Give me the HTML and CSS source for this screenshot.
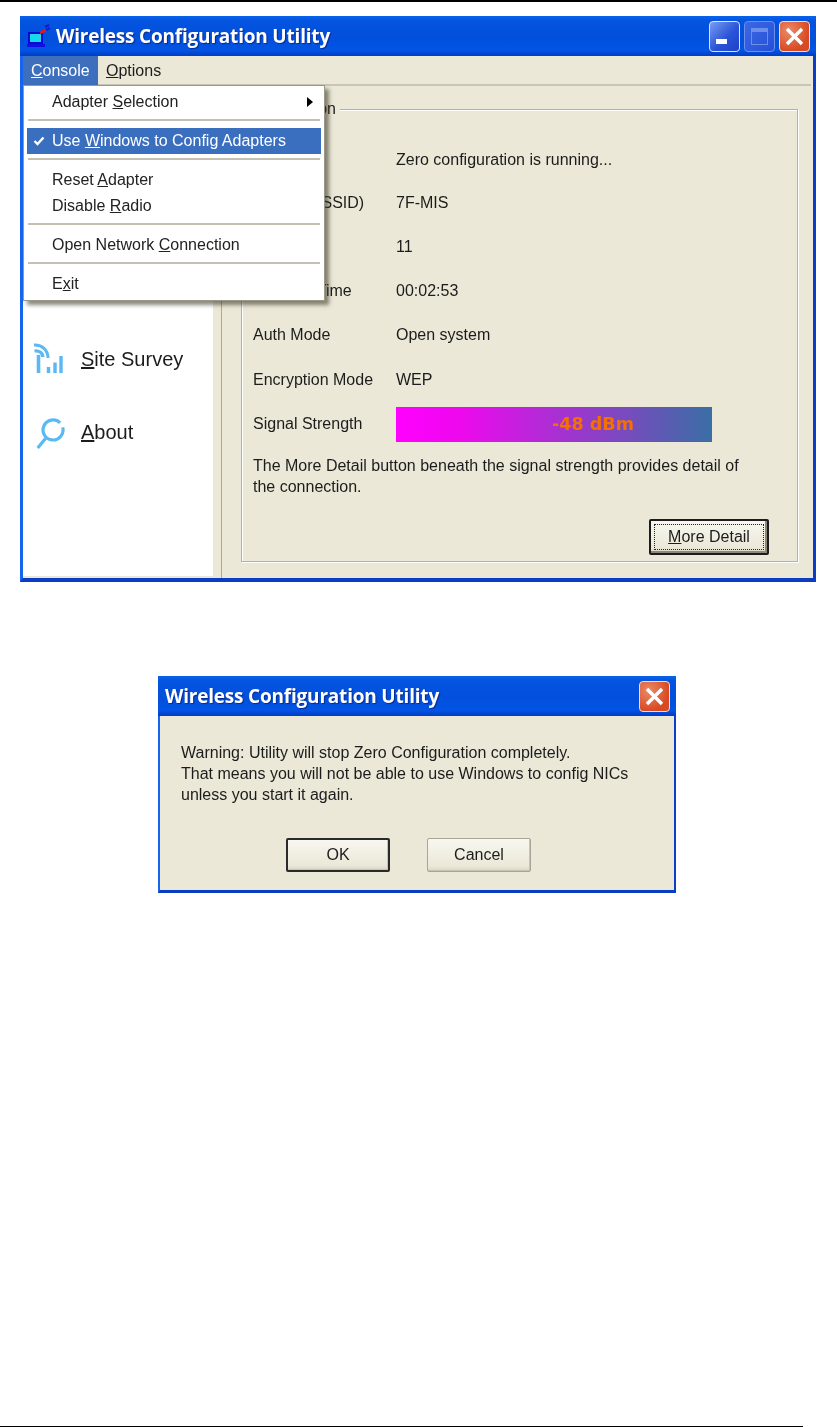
FILE: index.html
```html
<!DOCTYPE html>
<html lang="en">
<head>
    <meta charset="UTF-8">
    <meta name="viewport" content="width=device-width, initial-scale=1.0">
    <title>Wireless Configuration Utility</title>
    <link rel="stylesheet" href="styles.css">
</head>
<body>
    <div class="rule-top"></div>

    <div class="window main-window">
        <div class="titlebar">
            <svg class="app-icon" width="24" height="24" viewBox="0 0 24 24">
                <rect x="2" y="9" width="13" height="10" fill="#18d8f0" stroke="#0808d0" stroke-width="2"/>
                <rect x="0" y="20" width="18" height="3" fill="#1010e0"/>
                <path d="M13 9 L19 6" stroke="#e01818" stroke-width="3"/>
                <path d="M18 3 L22 1 M19 6 L23 4" stroke="#1818d0" stroke-width="2"/>
            </svg>
            <span class="title-text">Wireless Configuration Utility</span>
            <div class="title-buttons">
                <div class="cap-btn cap-min"><span class="min-glyph"></span></div>
                <div class="cap-btn cap-max"><span class="max-glyph"></span></div>
                <div class="cap-btn cap-close">
                    <svg width="21" height="21" viewBox="0 0 21 21"><path d="M3 3 L18 18 M18 3 L3 18" stroke="#fff" stroke-width="3.4"/></svg>
                </div>
            </div>
        </div>

        <div class="client">
            <div class="menubar">
                <div class="menubar-item active"><u>C</u>onsole</div>
                <div class="menubar-item"><u>O</u>ptions</div>
            </div>

            <div class="panes">
                <div class="sidebar">
                    <div class="side-item">
                        <svg width="32" height="34" viewBox="0 0 32 34" fill="none" stroke="#5ab8f4">
                            <path d="M1 3 C9 2.5 15 8 15 16" stroke-width="3"/>
                            <path d="M1.5 9 C6.5 8.5 9.8 11 9.8 15" stroke-width="3.2"/>
                            <path d="M5.5 13 V31" stroke-width="3.6"/>
                            <path d="M15.5 25 V31 M22 20.5 V31 M28 14 V31" stroke-width="3.4"/>
                        </svg>
                        <span><u>S</u>ite Survey</span>
                    </div>
                    <div class="side-item">
                        <svg width="32" height="34" viewBox="0 0 32 34" fill="none" stroke="#5ab8f4">
                            <path d="M27.1 7.9 A10 10 0 1 0 29.7 12.4" stroke-width="3.2"/>
                            <path d="M12.7 23.3 L4.7 33" stroke-width="3.2"/>
                        </svg>
                        <span><u>A</u>bout</span>
                    </div>
                </div>

                <div class="main-pane">
                    <div class="group">
                        <span class="group-label">Connection</span>
                        <div class="fields">
                            <span>Status</span><span>Zero configuration is running...</span>
                            <span>Network (SSID)</span><span>7F-MIS</span>
                            <span>Channel</span><span>11</span>
                            <span>Connect Time</span><span>00:02:53</span>
                            <span>Auth Mode</span><span>Open system</span>
                            <span>Encryption Mode</span><span>WEP</span>
                            <span>Signal Strength</span><div class="signal-bar">-48 dBm</div>
                        </div>
                        <p class="note">The More Detail button beneath the signal strength provides detail of the connection.</p>
                        <div class="group-actions">
                            <button class="btn btn-focus"><span class="focus-ring"><span><u>M</u>ore Detail</span></span></button>
                        </div>
                    </div>
                </div>
            </div>

            <div class="menu">
                <div class="menu-item"><span class="check"></span><span>Adapter <u>S</u>election</span><span class="arrow"></span></div>
                <div class="menu-sep"></div>
                <div class="menu-item selected">
                    <span class="check"><svg width="12" height="10" viewBox="0 0 12 10" fill="none"><path d="M1.5 5 L4.5 8 L10.5 1.5" stroke="#fff" stroke-width="2.4"/></svg></span><span>Use <u>W</u>indows to Config Adapters</span>
                </div>
                <div class="menu-sep"></div>
                <div class="menu-item"><span class="check"></span><span>Reset <u>A</u>dapter</span></div>
                <div class="menu-item"><span class="check"></span><span>Disable <u>R</u>adio</span></div>
                <div class="menu-sep"></div>
                <div class="menu-item"><span class="check"></span><span>Open Network <u>C</u>onnection</span></div>
                <div class="menu-sep"></div>
                <div class="menu-item"><span class="check"></span><span>E<u>x</u>it</span></div>
            </div>
        </div>
    </div>

    <div class="window dialog">
        <div class="titlebar">
            <span class="title-text">Wireless Configuration Utility</span>
            <div class="title-buttons">
                <div class="cap-btn cap-close">
                    <svg width="21" height="21" viewBox="0 0 21 21"><path d="M3 3 L18 18 M18 3 L3 18" stroke="#fff" stroke-width="3.4"/></svg>
                </div>
            </div>
        </div>
        <div class="dialog-body">
            <p class="dialog-text">Warning: Utility will stop Zero Configuration completely.<br>That means you will not be able to use Windows to config NICs<br>unless you start it again.</p>
            <div class="dialog-actions">
                <button class="btn btn-default">OK</button>
                <button class="btn">Cancel</button>
            </div>
        </div>
    </div>

    <div class="rule-bottom"></div>
</body>
</html>
```
FILE: styles.css
```css
html, body {
    margin: 0;
    padding: 0;
}
body {
    width: 837px;
    height: 1427px;
    display: flex;
    flex-direction: column;
    align-items: flex-start;
    background: #fff;
    color: #1c1c1c;
    font-family: "Liberation Sans", Arial, sans-serif;
    font-size: 16px;
    overflow: hidden;
}
.rule-top {
    width: 100%;
    height: 2px;
    background: #000;
}
.rule-bottom {
    width: 803px;
    height: 1px;
    margin-top: auto;
    background: #000;
}

/* window frames */
.window {
    box-sizing: border-box;
    display: flex;
    flex-direction: column;
    border-left: 3px solid #1565ee;
    border-right: 3px solid #0a3fca;
    border-bottom: 4px solid #0a3cc4;
    background: #ebe8d8;
    filter: blur(0.35px);
}
.main-window {
    width: 796px;
    height: 566px;
    margin: 14px 0 0 20px;
}
.dialog {
    width: 518px;
    height: 217px;
    margin: 94px 0 0 158px;
    border-left-width: 2px;
    border-right-width: 2px;
    border-bottom-width: 3px;
}
.titlebar {
    display: flex;
    align-items: center;
    height: 40px;
    flex: none;
    margin: 0 -3px;
    padding: 0 6px 0 7px;
    background: linear-gradient(#0a62ea 0, #0454e0 12%, #024fdc 55%, #0355e6 85%, #003cc4 100%);
}
.dialog .titlebar {
    margin: 0 -2px;
}
.app-icon {
    margin-right: 5px;
}
.title-text {
    color: #fff;
    font-family: "Open Sans", sans-serif;
    font-weight: 700;
    font-size: 19px;
    letter-spacing: -0.2px;
    text-shadow: 1px 1px 1px #0a2a90;
}
.title-buttons {
    display: flex;
    gap: 4px;
    margin-left: auto;
}
.cap-btn {
    box-sizing: border-box;
    width: 31px;
    height: 31px;
    border: 1px solid #d8e4fa;
    border-radius: 4px;
    display: flex;
    align-items: center;
    justify-content: center;
}
.cap-min {
    background: linear-gradient(135deg, #7a9cf0, #2a55d8 55%, #1c40c8);
    align-items: flex-end;
    justify-content: flex-start;
}
.min-glyph {
    width: 11px;
    height: 5px;
    margin: 0 0 7px 6px;
    background: #fff;
}
.cap-max {
    border-color: #6c90ea;
    background: linear-gradient(135deg, #3c68e4, #2450d8);
}
.max-glyph {
    box-sizing: border-box;
    width: 17px;
    height: 17px;
    border: 1px solid #6c90ea;
    border-top-width: 4px;
}
.cap-close {
    background: radial-gradient(circle at 30% 30%, #ec8a68, #d84a22 70%);
    border-color: #e8e2dc;
}

/* main window contents */
.client {
    position: relative;
    flex: 1;
    display: flex;
    flex-direction: column;
    min-height: 0;
}
.menubar {
    display: flex;
    height: 30px;
    flex: none;
    box-sizing: border-box;
    border-bottom: 2px solid #c9c6b6;
    margin-right: 2px;
}
.menubar-item {
    height: 29px;
    line-height: 29px;
    padding: 0 8px;
}
.menubar-item.active {
    width: 75px;
    box-sizing: border-box;
    background: #3e6fbd;
    color: #fff;
}
.panes {
    flex: 1;
    display: flex;
    min-height: 0;
}
.sidebar {
    width: 190px;
    box-sizing: border-box;
    margin-bottom: 2px;
    padding: 253px 0 0 10px;
    background: #fff;
    display: flex;
    flex-direction: column;
    gap: 33px;
    font-size: 20px;
}
.side-item {
    display: flex;
    align-items: center;
    gap: 16px;
    height: 40px;
}
.main-pane {
    flex: 1;
    margin-left: 8px;
    padding: 23px 15px 14px 19px;
    border-left: 1px solid #aca899;
}
.group {
    position: relative;
    box-sizing: border-box;
    height: 453px;
    padding: 28px 28px 0 11px;
    border: 1px solid #b5b2a3;
    box-shadow: 1px 1px 0 #fff, inset 1px 1px 0 #fff;
}
.group-label {
    position: absolute;
    top: -10px;
    left: 9px;
    padding: 0 4px;
    background: #ebe8d8;
}
.fields {
    display: grid;
    grid-template-columns: 143px 1fr;
    grid-template-rows: 43px 44px 44px 44px 44px 45px 44px;
    align-items: center;
}
.signal-bar {
    width: 316px;
    height: 35px;
    box-sizing: border-box;
    padding-left: 78px;
    line-height: 35px;
    text-align: center;
    background: linear-gradient(90deg, #ff00ff, #ee08ee 20%, #3a6ea5);
    color: #f47000;
    font-family: "DejaVu Sans", sans-serif;
    font-weight: 700;
    font-size: 17.5px;
}
.note {
    margin: 9px 0 0;
    width: 510px;
    line-height: 21px;
}
.group-actions {
    display: flex;
    justify-content: flex-end;
    margin-top: 22px;
}

/* buttons */
.btn {
    box-sizing: border-box;
    width: 104px;
    height: 34px;
    padding: 0;
    border: 1px solid #a8a596;
    border-radius: 2px;
    background: linear-gradient(#f8f7f0, #ebe8d8 85%, #d8d4c4);
    box-shadow: inset -1px -1px 0 #c8c4b4;
    color: inherit;
    font: inherit;
}
.btn-default {
    border: 2px solid #2a2a2a;
}
.btn-focus {
    width: 120px;
    height: 36px;
    padding: 3px;
    border: 2px solid #1c1c1c;
    box-shadow: inset -2px -2px 0 #8c8978;
}
.focus-ring {
    display: flex;
    align-items: center;
    justify-content: center;
    height: 100%;
    box-sizing: border-box;
    border: 1px dotted #222;
}

/* dropdown */
.menu {
    position: absolute;
    top: 29px;
    left: 0;
    width: 302px;
    box-sizing: border-box;
    padding: 3px 3px 3px;
    background: #fff;
    border: 1px solid #9a9888;
    box-shadow: 4px 4px 4px rgba(60, 58, 40, 0.6);
}
.menu-item {
    display: flex;
    align-items: center;
    height: 26px;
    color: #222;
}
.menu-item.selected {
    background: #3a6ebf;
    color: #fff;
}
.check {
    flex: none;
    width: 25px;
    padding-left: 6px;
    box-sizing: border-box;
    display: flex;
    align-items: center;
}
.arrow {
    margin: 0 8px 0 auto;
    border-left: 6px solid #000;
    border-top: 5px solid transparent;
    border-bottom: 5px solid transparent;
}
.menu-sep {
    height: 2px;
    margin: 4px 1px 7px;
    background: #c4c1b2;
}

/* dialog */
.dialog-body {
    padding: 26px 0 0 21px;
}
.dialog-text {
    margin: 0;
    line-height: 21px;
}
.dialog-actions {
    display: flex;
    gap: 37px;
    margin: 33px 0 0 105px;
}
```
